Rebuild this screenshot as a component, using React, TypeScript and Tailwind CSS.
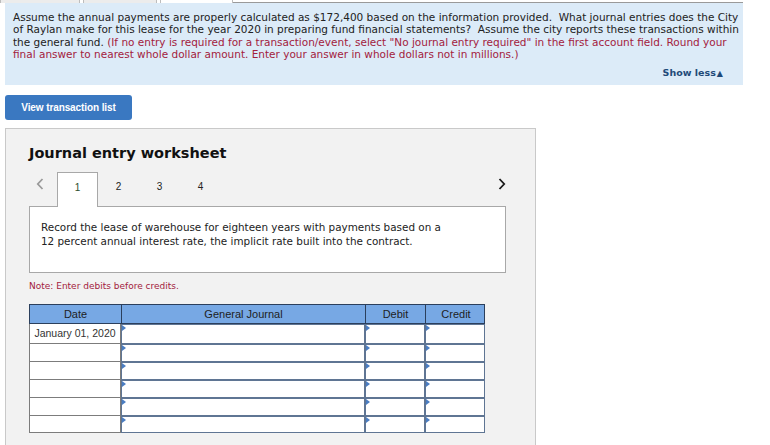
const rows = [
  { date: "January 01, 2020", h: "h-[20px]" },
  { date: "", h: "h-[18px]" },
  { date: "", h: "h-[18px]" },
  { date: "", h: "h-[18px]" },
  { date: "", h: "h-[18px]" },
  { date: "", h: "h-[17px]" },
];

function InputCell() {
  return (
    <div className="relative h-full border border-[#5f7593] bg-white">
      <span className="absolute left-0 top-0 h-0 w-0 border-y-[3px] border-l-[4px] border-y-transparent border-l-[#4a7dc2]" />
    </div>
  );
}

function Chevron({ dir, className }: { dir: "left" | "right"; className: string }) {
  return (
    <svg width="8" height="12" viewBox="0 0 8 12" className={className}>
      <path
        d={dir === "left" ? "M6.5 1 L1.8 6 L6.5 11" : "M1.5 1 L6.2 6 L1.5 11"}
        fill="none"
        stroke="currentColor"
        strokeWidth="1.8"
      />
    </svg>
  );
}

function JournalTable() {
  return (
    <div className="w-[456px] font-['Liberation_Sans',Arial,sans-serif] text-[#1e1e1e]">
      <div className="grid h-[20px] grid-cols-[92px_244px_60px_60px] border border-[#2b3f5c] bg-[#77a8e4] text-[11px]">
        <div className="flex items-center justify-center border-r border-[#2b3f5c]">Date</div>
        <div className="flex items-center justify-center border-r border-[#2b3f5c]">General Journal</div>
        <div className="flex items-center justify-center border-r border-[#2b3f5c]">Debit</div>
        <div className="flex items-center justify-center">Credit</div>
      </div>
      {rows.map((row, i) => (
        <div key={i} className={`grid ${row.h} grid-cols-[92px_244px_60px_60px]`}>
          <div className="flex items-center justify-center border-x border-b border-[#7c7c7c] bg-white text-[10.5px] text-[#333]">
            {row.date}
          </div>
          <InputCell />
          <InputCell />
          <InputCell />
        </div>
      ))}
    </div>
  );
}

export default function App() {
  return (
    <div className="min-h-[445px] overflow-hidden bg-white font-['DejaVu_Sans',Verdana,sans-serif] text-[#222]">
      {/* tab strip peeking at the top */}
      <div className="flex h-[3px] w-[743px]">
        <div className="w-[80px] border-x border-[#bdbdbd] bg-[#ececec]" />
        <div className="ml-[3px] w-[74px] border-x border-[#bdbdbd] bg-[#ececec]" />
        <div className="ml-[3px] w-[73px] border-x border-[#bdbdbd] bg-white" />
        <div className="flex-1 border-b border-[#9a9a9a]" />
      </div>

      <div className="ml-[5px] w-[738px] bg-[#dcebf8] pb-[5px] pl-[8px] pr-[2px] pt-[8px]">
        <p className="whitespace-nowrap text-[10.5px] leading-[12.4px]">
          Assume the annual payments are properly calculated as $172,400 based on the information provided.&nbsp; What journal
          entries does the City
          <br />
          of Raylan make for this lease for the year 2020 in preparing fund financial statements?&nbsp; Assume the city reports
          these transactions within
          <br />
          the general fund.{" "}
          <span className="text-[#a3213d]">
            (If no entry is required for a transaction/event, select "No journal entry required" in the first account field.
            Round your
            <br />
            final answer to nearest whole dollar amount. Enter your answer in whole dollars not in millions.)
          </span>
        </p>
        <div className="mt-[5px] flex justify-end pr-[18px]">
          <span className="text-[9.5px] font-bold text-[#1f4a78]">
            Show less<span className="ml-[1px] text-[8px]">▲</span>
          </span>
        </div>
      </div>

      <button
        type="button"
        className="ml-[5px] mt-[10px] flex h-[25px] w-[127px] items-center justify-center rounded-[3px] bg-[#3a78c1] font-['Liberation_Sans',Arial,sans-serif] text-[10px] font-bold tracking-[-0.1px] text-white"
      >
        View transaction list
      </button>

      <div className="ml-[5px] mt-[8px] h-[330px] w-[531px] border border-[#c9c9c9] bg-[#f2f2f2] pl-[23px] pt-[15px]">
        <h2 className="text-[14.5px] font-bold leading-[18px] text-[#111]">Journal entry worksheet</h2>

        <div className="mt-[10px] flex h-[34px] w-[477px] items-start">
          <div className="flex w-[28px] pl-[7px] pt-[6px] text-[#9a9a9a]">
            <Chevron dir="left" className="" />
          </div>
          <div className="relative z-10 flex h-[35px] w-[41px] justify-center border-x border-t border-[#a8a8a8] bg-white pt-[7px] font-['Liberation_Sans',Arial,sans-serif] text-[10px] text-[#2d4d2d]">
            1
          </div>
          {["2", "3", "4"].map((n) => (
            <div key={n} className="flex w-[41px] justify-center pt-[7px] font-['Liberation_Sans',Arial,sans-serif] text-[10px] text-[#222]">
              {n}
            </div>
          ))}
          <div className="ml-auto flex pr-[-2px] pt-[6px] text-[#1a1a1a]">
            <Chevron dir="right" className="" />
          </div>
        </div>

        <div className="h-[67px] w-[477px] border border-[#a8a8a8] bg-white pl-[11px] pt-[13px]">
          <p className="whitespace-nowrap text-[10.4px] leading-[14px] text-[#222]">
            Record the lease of warehouse for eighteen years with payments based on a
            <br />
            12 percent annual interest rate, the implicit rate built into the contract.
          </p>
        </div>

        <p className="mt-[7px] text-[9px] text-[#a3213d]">Note: Enter debits before credits.</p>

        <div className="mt-[11px]">
          <JournalTable />
        </div>
      </div>
    </div>
  );
}
